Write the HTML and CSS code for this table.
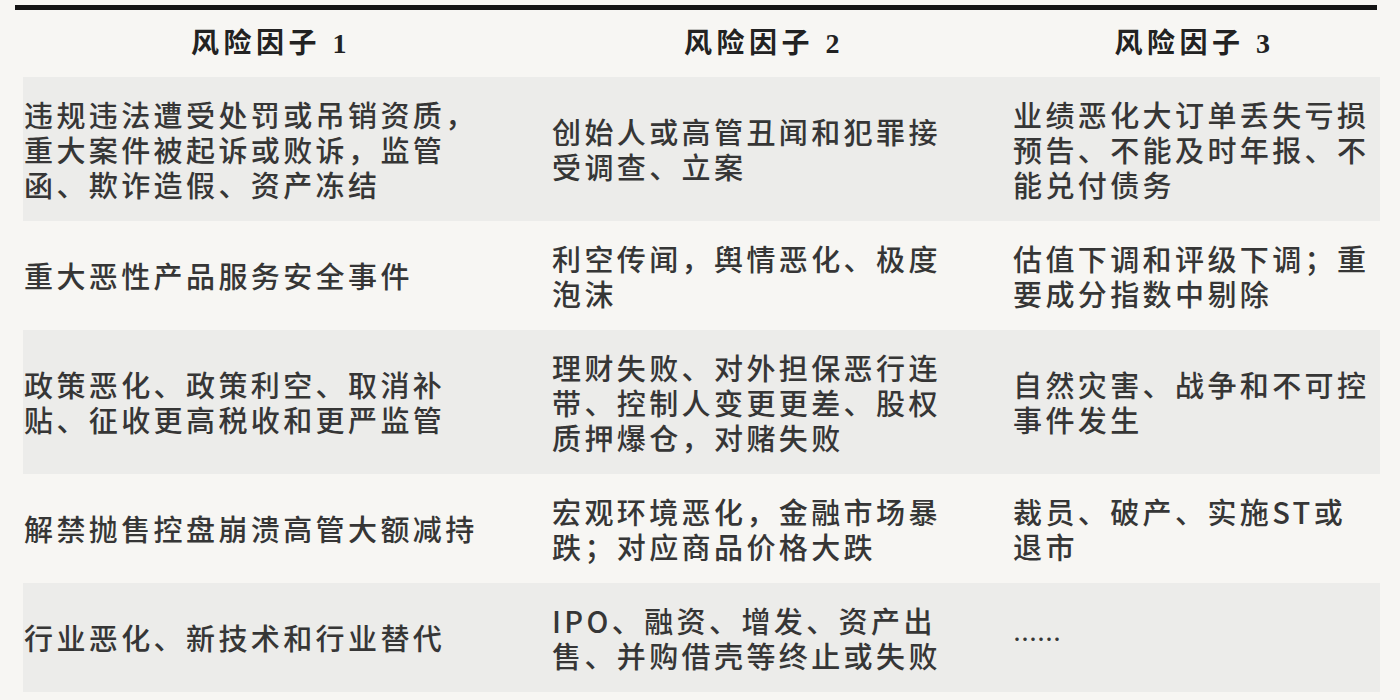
FILE: index.html
```html
<!DOCTYPE html>
<html lang="zh-CN">
<head>
<meta charset="utf-8">
<title>风险因子</title>
<link rel="stylesheet" href="styles.css">
</head>
<body>
<div class="sheet">
  <div class="rule"></div>
  <div class="table">
    <div class="row head">
      <div class="cell">风险因子 1</div>
      <div class="cell">风险因子 2</div>
      <div class="cell">风险因子 3</div>
    </div>
    <div class="row shade">
      <div class="cell c1">违规违法遭受处罚或吊销资质，<br>重大案件被起诉或败诉，监管<br>函、欺诈造假、资产冻结</div>
      <div class="cell c2">创始人或高管丑闻和犯罪接<br>受调查、立案</div>
      <div class="cell c3">业绩恶化大订单丢失亏损<br>预告、不能及时年报、不<br>能兑付债务</div>
    </div>
    <div class="row">
      <div class="cell c1">重大恶性产品服务安全事件</div>
      <div class="cell c2">利空传闻，舆情恶化、极度<br>泡沫</div>
      <div class="cell c3">估值下调和评级下调；重<br>要成分指数中剔除</div>
    </div>
    <div class="row shade">
      <div class="cell c1">政策恶化、政策利空、取消补<br>贴、征收更高税收和更严监管</div>
      <div class="cell c2">理财失败、对外担保恶行连<br>带、控制人变更更差、股权<br>质押爆仓，对赌失败</div>
      <div class="cell c3">自然灾害、战争和不可控<br>事件发生</div>
    </div>
    <div class="row">
      <div class="cell c1">解禁抛售控盘崩溃高管大额减持</div>
      <div class="cell c2">宏观环境恶化，金融市场暴<br>跌；对应商品价格大跌</div>
      <div class="cell c3">裁员、破产、实施ST或<br>退市</div>
    </div>
    <div class="row shade">
      <div class="cell c1">行业恶化、新技术和行业替代</div>
      <div class="cell c2">IPO、融资、增发、资产出<br>售、并购借壳等终止或失败</div>
      <div class="cell c3 dots">……</div>
    </div>
  </div>
</div>
</body>
</html>
```

FILE: styles.css
```css
html, body {
  margin: 0;
  padding: 0;
  background: #f7f6f3;
}

.sheet {
  padding: 5px 0 0 15px;
  width: 1365px;
}

.rule {
  width: 1362px;
  height: 5px;
  background: #141414;
}

.table {
  margin-left: 8px;
  width: 1357px;
  font-family: "Noto Sans CJK SC", sans-serif;
  font-weight: 500;
  color: #363636;
  font-size: 29px;
  letter-spacing: 3.4px;
  line-height: 35px;
}

.row {
  display: grid;
  grid-template-columns: 496px 490px 371px;
  align-items: center;
}

.row.shade {
  background: #ececea;
}

.row .cell {
  padding: 19.5px 0;
  white-space: nowrap;
}

.row.head {
  height: 67px;
}

.row.head .cell {
  padding: 0;
  text-align: center;
  font-family: "Liberation Serif", "Noto Sans CJK SC", serif;
  font-weight: 700;
  font-size: 28px;
  letter-spacing: 4.5px;
  color: #222222;
}

.c1 {
  padding-left: 1px !important;
}

.c2 {
  padding-left: 33px !important;
}

.c3 {
  padding-left: 4px !important;
}

.dots {
  letter-spacing: 0;
  font-size: 24px;
}
```
